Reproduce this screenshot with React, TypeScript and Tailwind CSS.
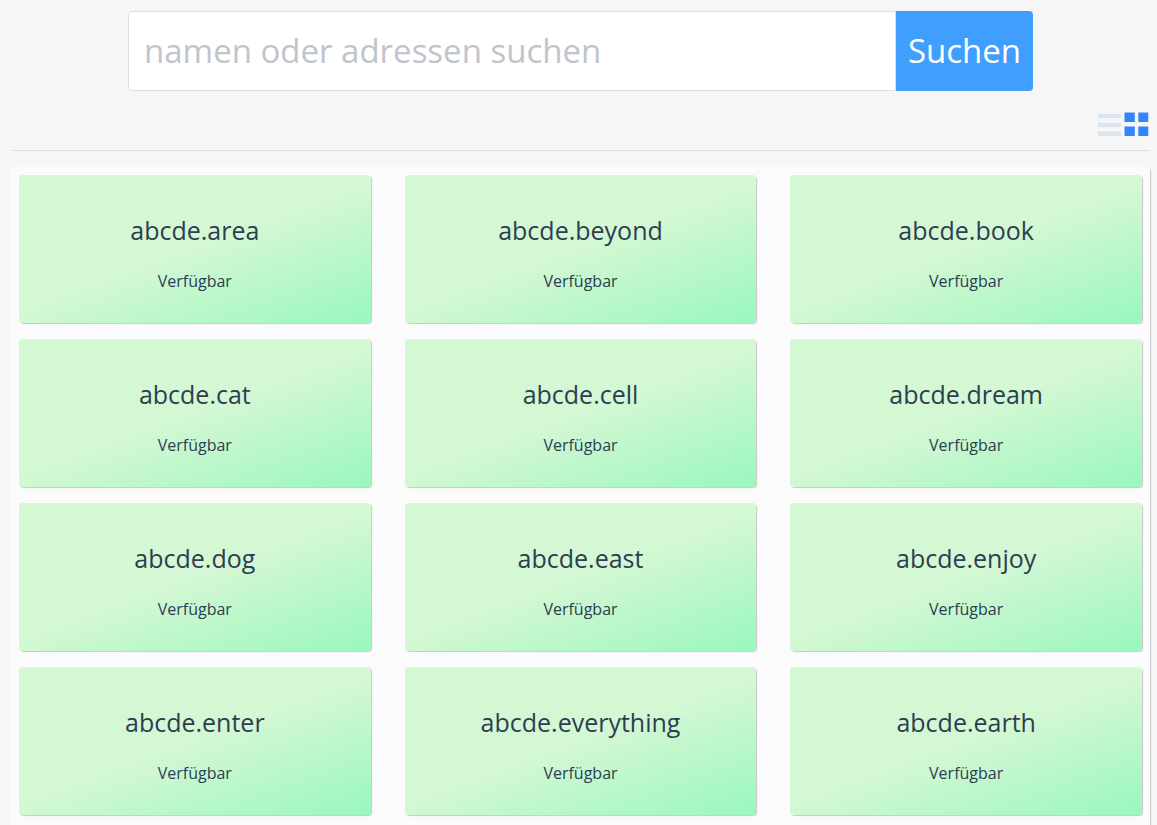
import { useState } from "react";

const names = [
  "abcde.area",
  "abcde.beyond",
  "abcde.book",
  "abcde.cat",
  "abcde.cell",
  "abcde.dream",
  "abcde.dog",
  "abcde.east",
  "abcde.enjoy",
  "abcde.enter",
  "abcde.everything",
  "abcde.earth",
];

function SearchBar() {
  return (
    <form
      className="mx-auto flex h-20 w-full max-w-[905px]"
      onSubmit={(event) => event.preventDefault()}
    >
      <input
        type="text"
        aria-label="namen oder adressen suchen"
        placeholder="namen oder adressen suchen"
        className="min-w-0 flex-1 rounded-l border border-[#dcdfe6] bg-white px-[15px] text-[33px] text-[#606266] outline-none placeholder:text-[#c0c4cc]"
      />
      <button
        type="submit"
        className="w-[137px] shrink-0 rounded-r bg-[#409eff] text-center text-[33px] text-white"
      >
        Suchen
      </button>
    </form>
  );
}

function ListIcon() {
  return (
    <svg width="24" height="26" viewBox="0 0 24 26" fill="currentColor" aria-hidden="true">
      <path d="M0 3h23v4H0zM0 11.7h23v4.3H0zM0 20.3h23v4.7H0z" />
    </svg>
  );
}

function GridIcon() {
  return (
    <svg width="26" height="26" viewBox="0 0 26 26" fill="currentColor" aria-hidden="true">
      <path d="M.5 1.5h10.3v9.5H.5zM14.3 1.5h10v9.5h-10zM.5 15.4h10.3v9.5H.5zM14.3 15.4h10v9.5h-10z" />
    </svg>
  );
}

export default function App() {
  const [view, setView] = useState<"list" | "grid">("grid");
  const active = "text-[#3385ff]";
  const idle = "text-[#dbe5ef]";

  return (
    <div className="min-h-screen bg-[#f6f6f6] pt-[11px] pr-[7px] pl-[11px] font-['Open_Sans','Noto_Sans',sans-serif] text-[#2c3e50]">
      <SearchBar />
      <div className="mt-5 flex justify-end gap-[2px] border-b border-[#dcdfe6] pb-[13px]">
        <button
          type="button"
          aria-label="Liste"
          className={view === "list" ? active : idle}
          onClick={() => setView("list")}
        >
          <ListIcon />
        </button>
        <button
          type="button"
          aria-label="Raster"
          className={view === "grid" ? active : idle}
          onClick={() => setView("grid")}
        >
          <GridIcon />
        </button>
      </div>
      <ul
        className={`mt-4 grid gap-x-[34px] gap-y-4 rounded bg-[#fbfbfb] px-2 pt-2 pb-4 shadow-[1px_1px_1px_#c8c8c8] ${
          view === "grid" ? "grid-cols-3" : "grid-cols-1"
        }`}
      >
        {names.map((name) => (
          <li
            key={name}
            className="flex h-[148px] flex-col items-center rounded bg-[linear-gradient(160deg,#d4f7d4_50%,#99f7be)] pt-[35px] shadow-[1px_1px_1px_#c8c8c8]"
          >
            <h2 className="text-[25px] leading-10">{name}</h2>
            <p className="mt-[19px] text-base leading-6">Verfügbar</p>
          </li>
        ))}
      </ul>
    </div>
  );
}
